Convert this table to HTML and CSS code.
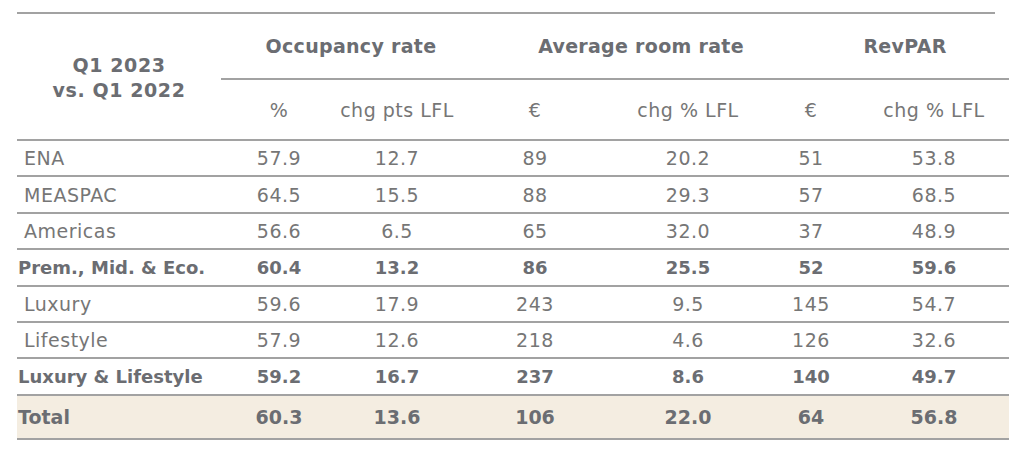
FILE: index.html
```html
<!DOCTYPE html>
<html>
<head>
<meta charset="utf-8">
<link rel="stylesheet" href="styles.css">
</head>
<body>
<div class="page">
  <div class="top-rule"></div>
  <table class="kpi">
    <colgroup>
      <col class="c-label"><col class="c1"><col class="c2"><col class="c3"><col class="c4"><col class="c5"><col class="c6">
    </colgroup>
    <thead>
      <tr class="grp-row">
        <th class="period" rowspan="2">Q1 2023<br>vs. Q1 2022</th>
        <th class="grp grp-occ" colspan="2">Occupancy rate</th>
        <th class="grp grp-arr" colspan="2">Average room rate</th>
        <th class="grp grp-rev" colspan="2">RevPAR</th>
      </tr>
      <tr class="sub-row">
        <th>%</th><th>chg pts LFL</th><th>€</th><th>chg % LFL</th><th>€</th><th>chg % LFL</th>
      </tr>
    </thead>
    <tbody>
      <tr><td class="label">ENA</td><td>57.9</td><td>12.7</td><td>89</td><td>20.2</td><td>51</td><td>53.8</td></tr>
      <tr><td class="label">MEASPAC</td><td>64.5</td><td>15.5</td><td>88</td><td>29.3</td><td>57</td><td>68.5</td></tr>
      <tr><td class="label">Americas</td><td>56.6</td><td>6.5</td><td>65</td><td>32.0</td><td>37</td><td>48.9</td></tr>
      <tr class="bold"><td class="label">Prem., Mid. &amp; Eco.</td><td>60.4</td><td>13.2</td><td>86</td><td>25.5</td><td>52</td><td>59.6</td></tr>
      <tr><td class="label">Luxury</td><td>59.6</td><td>17.9</td><td>243</td><td>9.5</td><td>145</td><td>54.7</td></tr>
      <tr><td class="label">Lifestyle</td><td>57.9</td><td>12.6</td><td>218</td><td>4.6</td><td>126</td><td>32.6</td></tr>
      <tr class="bold"><td class="label">Luxury &amp; Lifestyle</td><td>59.2</td><td>16.7</td><td>237</td><td>8.6</td><td>140</td><td>49.7</td></tr>
      <tr class="bold total"><td class="label">Total</td><td>60.3</td><td>13.6</td><td>106</td><td>22.0</td><td>64</td><td>56.8</td></tr>
    </tbody>
  </table>
</div>
</body>
</html>
```
FILE: styles.css
```css
html, body {
  margin: 0;
  padding: 0;
  background: #ffffff;
}
.page {
  padding: 12px 0 0 17px;
  font-family: "DejaVu Sans", Verdana, sans-serif;
  color: #767676;
}
.top-rule {
  width: 978px;
  height: 2px;
  background: #a2a2a2;
}
.kpi {
  border-collapse: collapse;
  table-layout: fixed;
  width: 992px;
  font-size: 19px;
  letter-spacing: 0.5px;
}
.c-label { width: 204px; }
.c1 { width: 116px; }
.c2 { width: 120px; }
.c3 { width: 156px; }
.c4 { width: 150px; }
.c5 { width: 96px; }
.c6 { width: 150px; }

.kpi th, .kpi td {
  padding: 0;
  text-align: center;
  vertical-align: middle;
  white-space: nowrap;
}
.kpi th {
  font-weight: normal;
}
.period {
  font-weight: bold !important;
  color: #6b6d72;
  line-height: 25px;
  font-size: 19px;
  letter-spacing: 0.6px;
  padding-top: 2px !important;
  border-bottom: 2px solid #a2a2a2;
}
.grp-row th.grp {
  height: 64px;
  font-weight: bold;
  color: #6b6d72;
  font-size: 19px;
  letter-spacing: 0.3px;
  border-bottom: 2px solid #a2a2a2;
}
.grp-occ { padding-left: 24px !important; }
.grp-arr { padding-left: 62px !important; }
.grp-rev { padding-left: 38px !important; }
.sub-row th {
  height: 59px;
  border-bottom: 2px solid #a2a2a2;
}
.kpi tbody td {
  height: 34.4px;
  border-bottom: 2px solid #a2a2a2;
}
.kpi td.label {
  text-align: left;
  padding-left: 7px;
}
.kpi tr.bold td {
  font-weight: bold;
  color: #6b6d72;
  font-size: 18px;
  letter-spacing: 0;
}
.kpi tr.bold td.label {
  padding-left: 1px;
}
.kpi tr.total td {
  height: 42px;
  background: #f4ede1;
  font-size: 19px;
}
```
